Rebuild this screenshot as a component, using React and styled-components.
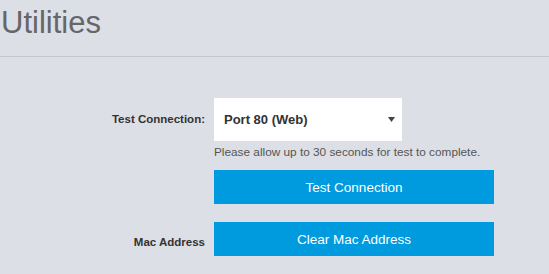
import React from "react";
import styled, { createGlobalStyle } from "styled-components";

const Global = createGlobalStyle`
  html, body { margin: 0; padding: 0; background: #dcdfe6; }
  body { font-family: "Liberation Sans", Arial, sans-serif; }
`;

const Page = styled.div`
  width: 549px;
  height: 274px;
  background: #dcdfe6;
  overflow: hidden;
`;

const Header = styled.header`
  height: 57px;
  border-bottom: 1px solid #c4c7ce;
  box-sizing: border-box;
  padding-top: 5px;
`;

const Title = styled.h1`
  margin: 0;
  font-family: "Liberation Sans", Arial, sans-serif;
  font-weight: normal;
  font-size: 31px;
  line-height: 35px;
  color: #666666;
  padding-left: 1px;
`;

const Form = styled.div`
  display: grid;
  grid-template-columns: 214px 280px;
  row-gap: 18px;
  padding-top: 41px;
`;

const Label = styled.div`
  text-align: right;
  padding-right: 9px;
  font-weight: bold;
  font-size: 11.5px;
  color: #333;
  line-height: 14px;
  padding-top: ${(p) => p.$top}px;
`;

const Control = styled.div`
  display: flex;
  flex-direction: column;
`;

const SelectBox = styled.div`
  width: 188px;
  height: 43px;
  background: #ffffff;
  box-sizing: border-box;
  padding: 0 7px 0 10px;
  display: flex;
  align-items: center;
  justify-content: space-between;
  font-weight: bold;
  font-size: 13px;
  color: #333;
`;

const Help = styled.div`
  margin-top: 4px;
  font-size: 11.8px;
  line-height: 14px;
  color: #555;
`;

const Button = styled.button`
  width: 280px;
  height: 34px;
  border: 0;
  margin: ${(p) => p.$mt || 0}px 0 0 0;
  padding: 0;
  background: #009ade;
  color: #ffffff;
  font-family: "Liberation Sans", Arial, sans-serif;
  font-size: 13.5px;
  cursor: pointer;
`;

const Arrow = () => (
  <svg width="7" height="5" viewBox="0 0 7 5">
    <path d="M0 0 H7 L3.5 5 Z" fill="#444" />
  </svg>
);

export default function App() {
  return (
    <Page>
      <Global />
      <Header>
        <Title>Utilities</Title>
      </Header>
      <Form>
        <Label $top={14}>Test Connection:</Label>
        <Control>
          <SelectBox>
            <span>Port 80 (Web)</span>
            <Arrow />
          </SelectBox>
          <Help>Please allow up to 30 seconds for test to complete.</Help>
          <Button $mt={11}>Test Connection</Button>
        </Control>
        <Label $top={13}>Mac Address</Label>
        <Control>
          <Button>Clear Mac Address</Button>
        </Control>
      </Form>
    </Page>
  );
}
